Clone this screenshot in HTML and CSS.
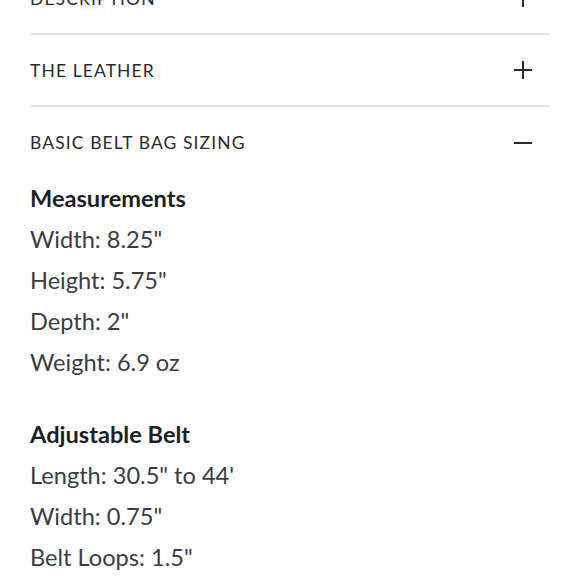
FILE: index.html
```html
<!DOCTYPE html>
<html>
<head>
<meta charset="utf-8">
<link rel="stylesheet" href="styles.css">
</head>
<body>
<div class="accordion">
  <div class="item">
    <div class="head"><span class="title">DESCRIPTION</span><span class="icon plus"></span></div>
  </div>
  <div class="item">
    <div class="head"><span class="title">THE LEATHER</span><span class="icon plus"></span></div>
  </div>
  <div class="item open">
    <div class="head"><span class="title">BASIC BELT BAG SIZING</span><span class="icon minus"></span></div>
    <div class="body">
      <div class="group">
        <p class="label">Measurements</p>
        <p>Width: 8.25"</p>
        <p>Height: 5.75"</p>
        <p>Depth: 2"</p>
        <p>Weight: 6.9 oz</p>
      </div>
      <div class="group">
        <p class="label">Adjustable Belt</p>
        <p>Length: 30.5" to 44'</p>
        <p>Width: 0.75"</p>
        <p>Belt Loops: 1.5"</p>
      </div>
    </div>
  </div>
</div>
</body>
</html>
```
FILE: styles.css
```css
html, body {
  margin: 0;
  padding: 0;
  background: #ffffff;
}
body {
  font-family: Lato, "Liberation Sans", sans-serif;
  overflow: hidden;
  height: 580px;
}
.accordion {
  margin: -37px 30px 0 30px;
}
.item .head {
  height: 70px;
  border-bottom: 2px solid #e2e2e2;
  display: flex;
  align-items: center;
  justify-content: space-between;
}
.item.open .head {
  border-bottom: none;
  height: 71px;
}
.title {
  font-size: 17.5px;
  letter-spacing: 1.1px;
  color: #2b2b2b;
  font-weight: 400;
}
.icon {
  width: 18px;
  height: 18px;
  margin-right: 18px;
  position: relative;
  flex: none;
}
.icon::before, .icon::after {
  content: "";
  position: absolute;
  background: #2b2b2b;
}
.icon::before {
  left: 0;
  right: 0;
  top: 8px;
  height: 2px;
}
.plus::after {
  top: 0;
  bottom: 0;
  left: 8px;
  width: 2px;
}
.group {
  margin-bottom: 31px;
}
.group p {
  margin: 0;
  font-size: 23.6px;
  line-height: 41px;
  color: #3a3d44;
}
.group p.label {
  font-weight: 700;
  color: #1c1f26;
}
```
